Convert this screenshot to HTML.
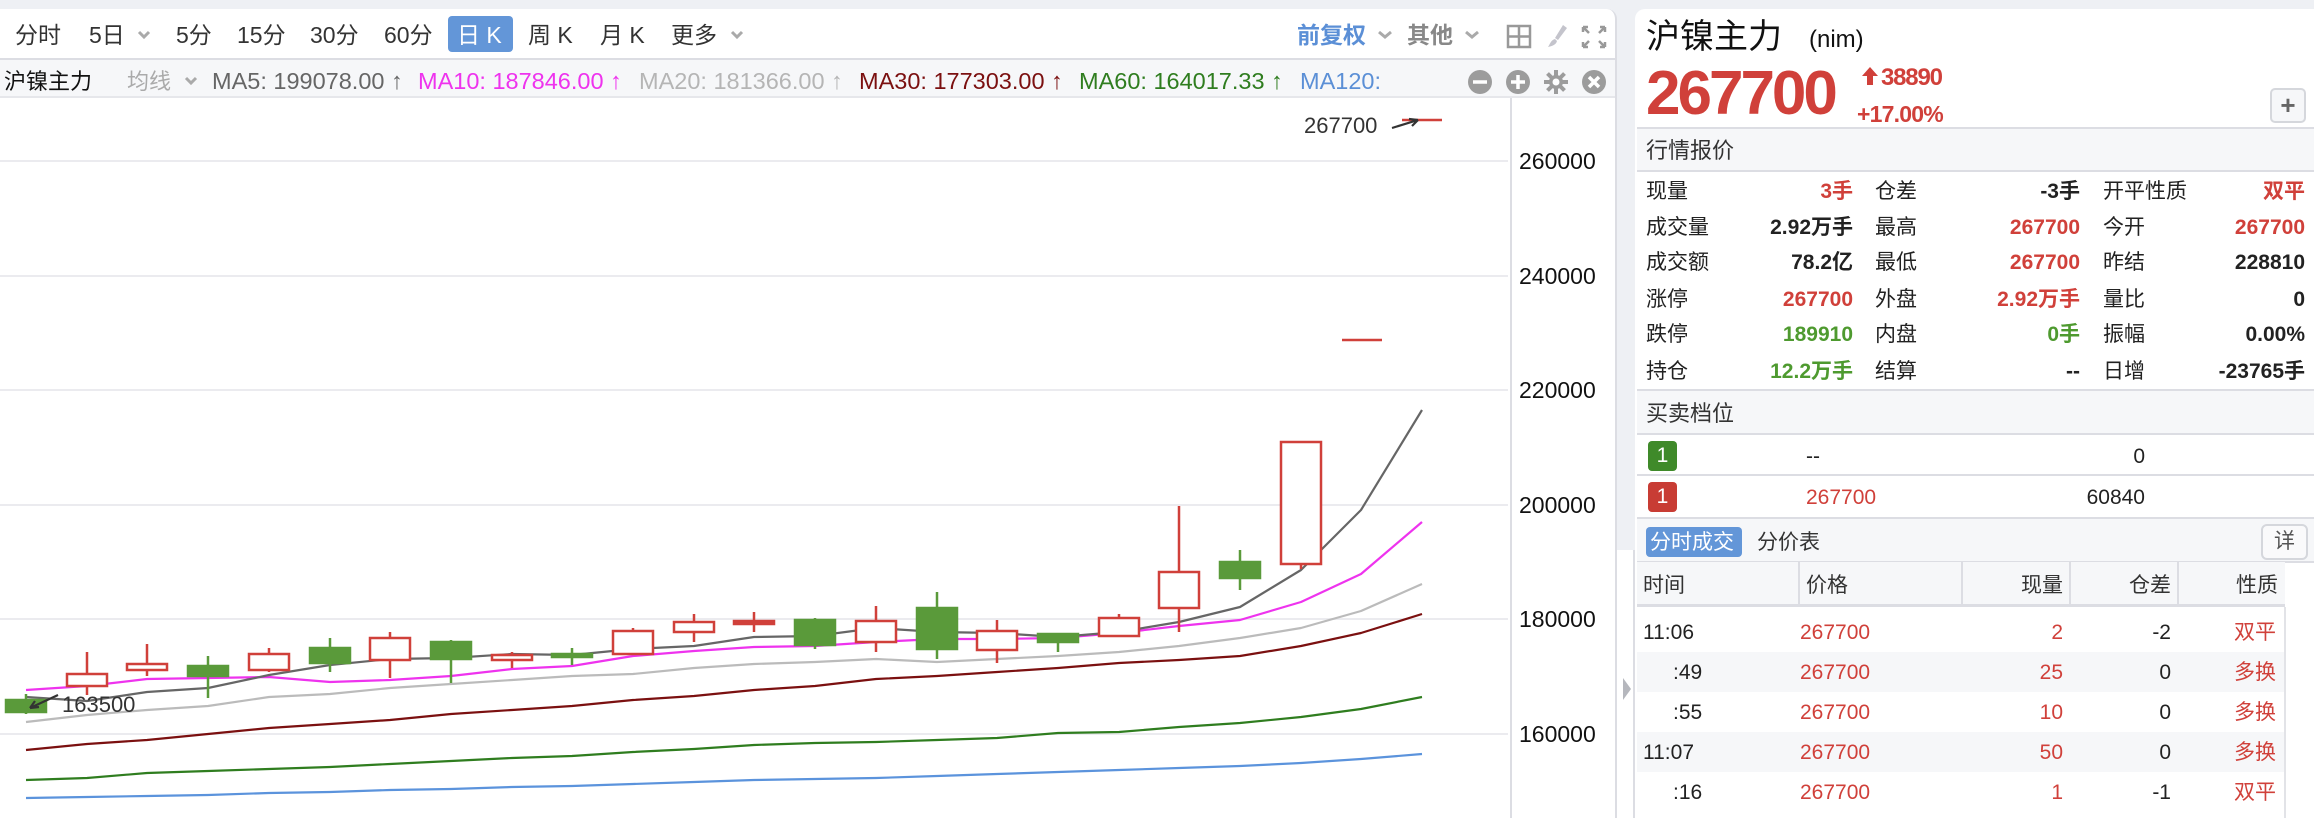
<!DOCTYPE html>
<html><head><meta charset="utf-8">
<style>
*{margin:0;padding:0;box-sizing:border-box}
body{width:2314px;height:818px;background:#eef0f4;position:relative;overflow:hidden;font-family:"Liberation Sans","Noto Sans CJK SC",sans-serif;color:#222}
.a{position:absolute;white-space:nowrap;line-height:1}
.r{text-align:right}
.red{color:#d0403a}.grn{color:#4e9a2f}
.b{font-weight:bold}
</style></head><body>
<!-- left panel -->
<div class="a" style="left:0;top:9px;width:1617px;height:809px;background:#fff;border-top-right-radius:10px;border-right:2px solid #dcdde3"></div>
<div class="a" style="left:0;top:58px;width:1615px;height:40px;background:#f6f7f9;border-top:2px solid #dcdde3;border-bottom:2px solid #e6e7eb"></div>
<!-- toolbar -->
<div style="font-size:23px;color:#333">
<span class="a" style="left:15px;top:24px">分时</span>
<span class="a" style="left:89px;top:24px">5日</span>
<span class="a" style="left:176px;top:24px">5分</span>
<span class="a" style="left:237px;top:24px">15分</span>
<span class="a" style="left:310px;top:24px">30分</span>
<span class="a" style="left:384px;top:24px">60分</span>
<span class="a" style="left:448px;top:16px;width:65px;height:36px;background:#6396d8;border-radius:4px;color:#fff;padding:8px 0 0 9px">日 K</span>
<span class="a" style="left:528px;top:24px">周 K</span>
<span class="a" style="left:600px;top:24px">月 K</span>
<span class="a" style="left:671px;top:24px">更多</span>
<span class="a b" style="left:1297px;top:24px;color:#5b8fd6">前复权</span>
<span class="a b" style="left:1407px;top:24px;color:#888">其他</span>
</div>
<svg class="a" style="left:0;top:0" width="1617" height="98">
<g fill="none" stroke="#aaa" stroke-width="3">
<path d="M139 32l5 5 5-5M732 32l5 5 5-5M1379 32l6 5 6-5M1466 32l6 5 6-5M186 78l5 5 5-5"/>
</g>
<g fill="none" stroke="#999" stroke-width="2.5"><rect x="1508" y="26" width="22" height="21"/><path d="M1519 26v21M1508 36.5h22"/></g>
<path d="M1563 25l4 3-9 12-3-2z M1555 39c-4 1-5 5-7 8 4-1 8-2 9-6z" fill="#c4c4cc"/>
<g fill="none" stroke="#999" stroke-width="2.5"><path d="M1583 27l6 6M1583 27h5M1583 27v5M1605 27l-6 6M1605 27h-5M1605 27v5M1583 47l6-6M1583 47h5M1583 47v-5M1605 47l-6-6M1605 47h-5M1605 47v-5"/></g>
<g fill="#9c9c9c"><circle cx="1480" cy="82" r="12"/><circle cx="1518" cy="82" r="12"/><circle cx="1556" cy="82" r="7"/><circle cx="1594" cy="82" r="12"/></g>
<g stroke="#fff" stroke-width="3.5"><path d="M1473 82h14M1511 82h14M1518 75v14M1589 77l10 10M1599 77l-10 10"/></g>
<g stroke="#9c9c9c" stroke-width="4"><path d="M1556 70v24M1544 82h24M1547.5 73.5l17 17M1564.5 73.5l-17 17"/></g>
<circle cx="1556" cy="82" r="3.5" fill="#fff"/>
</svg>
<div style="font-size:22px">
<span class="a" style="left:4px;top:71px;color:#111">沪镍主力</span>
<span class="a" style="left:127px;top:71px;color:#aaa">均线</span>
</div>
<div style="font-size:23.5px">
<span class="a" style="left:212px;top:70px;color:#666">MA5: 199078.00 ↑</span>
<span class="a" style="left:418px;top:70px;color:#ee33ee">MA10: 187846.00 ↑</span>
<span class="a" style="left:639px;top:70px;color:#b5b5b5">MA20: 181366.00 ↑</span>
<span class="a" style="left:859px;top:70px;color:#7b1010">MA30: 177303.00 ↑</span>
<span class="a" style="left:1079px;top:70px;color:#2f7d1f">MA60: 164017.33 ↑</span>
<span class="a" style="left:1300px;top:70px;color:#5b8fd6">MA120:</span>
</div>
<!-- chart -->
<svg class="a" style="left:0;top:0" width="1615" height="818">
<g stroke="#ebebef" stroke-width="2"><path d="M0 161H1508M0 276H1508M0 390H1508M0 505H1508M0 619H1508M0 734H1508"/></g>
<path d="M1511 98V818" stroke="#dcdde3" stroke-width="2"/>
<g font-family="Liberation Sans,sans-serif" font-size="23" fill="#111">
<text x="1519" y="169">260000</text><text x="1519" y="284">240000</text><text x="1519" y="398">220000</text><text x="1519" y="513">200000</text><text x="1519" y="627">180000</text><text x="1519" y="742">160000</text>
</g>
<g fill="none" stroke-width="2.2" stroke-linejoin="round">
<polyline stroke="#5b93dc" points="26,798 87,797 147,796 208,795 269,793 330,792 390,790 451,789 512,787 572,786 633,784 694,782 754,780 815,779 876,778 937,776 997,774 1058,772 1119,770 1179,768 1240,766 1301,763 1361,759 1422,754"/>
<polyline stroke="#2f7d1f" points="26,780 87,778 147,773 208,771 269,769 330,767 390,764 451,761 512,758 572,756 633,752 694,749 754,745 815,743 876,742 937,740 997,738 1058,733 1119,732 1179,727 1240,723 1301,717 1361,709 1422,697"/>
<polyline stroke="#7b1010" points="26,750 87,744 147,740 208,734 269,728 330,724 390,720 451,714 512,710 572,706 633,700 694,696 754,690 815,686 876,679 937,676 997,672 1058,668 1119,663 1179,660 1240,656 1301,646 1361,633 1422,614"/>
<polyline stroke="#bbb" points="26,722 87,715 147,710 208,706 269,697 330,694 390,688 451,684 512,680 572,676 633,674 694,668 754,664 815,662 876,659 937,662 997,659 1058,656 1119,652 1179,646 1240,638 1301,628 1361,611 1422,584"/>
<polyline stroke="#ee33ee" points="26,690 87,686 147,679 208,678 269,677 330,682 390,680 451,676 512,669 572,666 633,656 694,651 754,647 815,646 876,642 937,639 997,639 1058,638 1119,633 1179,626 1240,620 1301,602 1361,574 1422,522"/>
<polyline stroke="#666" points="26,697 87,701 147,692 208,688 269,675 330,665 390,659 451,658 512,654 572,655 633,649 694,646 754,637 815,636 876,628 937,632 997,633 1058,637 1119,632 1179,622 1240,607 1301,570 1361,510 1422,410"/>
</g>
<g stroke-width="2.5">
<g stroke="#5a9a3a" fill="#5a9a3a">
<path d="M26 694V714M208 656V698M330 638V672M451 640V683M572 648V665M815 618V649M937 592V659M1058 634V652M1240 550V590"/>
<rect x="6" y="700" width="40" height="12"/><rect x="188" y="666" width="40" height="10"/><rect x="310" y="648" width="40" height="15"/><rect x="431" y="642" width="40" height="17"/><rect x="552" y="654" width="40" height="3"/><rect x="795" y="620" width="40" height="25"/><rect x="917" y="608" width="40" height="41"/><rect x="1038" y="634" width="40" height="8"/><rect x="1220" y="562" width="40" height="16"/>
</g>
<g stroke="#d0403a" fill="#fff">
<path d="M87 652V695M147 644V676M269 648V672M390 632V678M512 652V668M633 628V654M694 614V642M754 612V632M876 606V652M997 620V663M1119 614V636M1179 506V632M1301 442V569"/>
<rect x="67" y="674" width="40" height="12"/><rect x="127" y="664" width="40" height="6"/><rect x="249" y="654" width="40" height="16"/><rect x="370" y="638" width="40" height="22"/><rect x="492" y="655" width="40" height="5"/><rect x="613" y="631" width="40" height="23"/><rect x="674" y="622" width="40" height="10"/><rect x="856" y="621" width="40" height="21"/><rect x="977" y="631" width="40" height="19"/><rect x="1099" y="618" width="40" height="18"/><rect x="1159" y="572" width="40" height="36"/><rect x="1281" y="442" width="40" height="122"/>
<rect x="734" y="621" width="40" height="3" fill="#d0403a"/>
<path d="M1342 340H1382M1402 120H1442"/>
</g>
</g>
<g stroke="#333" stroke-width="2.2" fill="none"><path d="M58 695L30 708M30 708l9 -1M30 708l5 -7"/><path d="M1392 128L1418 120M1418 120l-9 -1M1418 120l-6 6"/></g>
<g font-family="Liberation Sans,sans-serif" font-size="22" fill="#333"><text x="62" y="712">163500</text><text x="1304" y="133">267700</text></g>
</svg>
<!-- splitter -->
<div class="a" style="left:1617px;top:550px;width:18px;height:268px;background:#fff;border-right:2px solid #dcdde3"></div>
<svg class="a" style="left:1620px;top:676px" width="14" height="26"><path d="M3 2L11 13L3 24Z" fill="#b5b7bd"/></svg>
<!-- right panel -->
<div class="a" style="left:1635px;top:9px;width:679px;height:809px;background:#fff;border-top-left-radius:10px"></div>
<span class="a" style="left:1646px;top:20px;font-size:34px;color:#111">沪镍主力</span>
<span class="a" style="left:1809px;top:28px;font-size:24px;color:#111">(nim)</span>
<span class="a b red" style="left:1646px;top:63px;font-size:62px;letter-spacing:-3px">267700</span>
<svg class="a" style="left:1860px;top:66px" width="20" height="20"><path d="M10 1L18 10H13V19H7V10H2Z" fill="#d0403a"/></svg>
<span class="a b red" style="left:1881px;top:66px;font-size:24px;letter-spacing:-1.2px">38890</span>
<span class="a b red" style="left:1857px;top:103px;font-size:23px;letter-spacing:-0.8px">+17.00%</span>
<div class="a" style="left:2270px;top:88px;width:36px;height:35px;border:2px solid #d5d7dc;border-radius:5px;background:#f6f7f9;font-size:26px;color:#666;text-align:center;line-height:30px;font-weight:bold">+</div>
<div class="a" style="left:1637px;top:127px;width:677px;height:45px;background:#f6f7f9;border-top:2px solid #dcdde3;border-bottom:2px solid #dcdde3"></div>
<span class="a" style="left:1646px;top:140px;font-size:22px;color:#333">行情报价</span>
<div style="font-size:21px">
<span class="a" style="left:1646px;top:181px">现量</span><span class="a r red b" style="right:461px;top:181px">3手</span><span class="a" style="left:1875px;top:181px">仓差</span><span class="a r b" style="right:234px;top:181px">-3手</span><span class="a" style="left:2103px;top:181px">开平性质</span><span class="a r red b" style="right:9px;top:181px">双平</span>
<span class="a" style="left:1646px;top:217px">成交量</span><span class="a r b" style="right:461px;top:217px">2.92万手</span><span class="a" style="left:1875px;top:217px">最高</span><span class="a r red b" style="right:234px;top:217px">267700</span><span class="a" style="left:2103px;top:217px">今开</span><span class="a r red b" style="right:9px;top:217px">267700</span>
<span class="a" style="left:1646px;top:252px">成交额</span><span class="a r b" style="right:461px;top:252px">78.2亿</span><span class="a" style="left:1875px;top:252px">最低</span><span class="a r red b" style="right:234px;top:252px">267700</span><span class="a" style="left:2103px;top:252px">昨结</span><span class="a r b" style="right:9px;top:252px">228810</span>
<span class="a" style="left:1646px;top:289px">涨停</span><span class="a r red b" style="right:461px;top:289px">267700</span><span class="a" style="left:1875px;top:289px">外盘</span><span class="a r red b" style="right:234px;top:289px">2.92万手</span><span class="a" style="left:2103px;top:289px">量比</span><span class="a r b" style="right:9px;top:289px">0</span>
<span class="a" style="left:1646px;top:324px">跌停</span><span class="a r grn b" style="right:461px;top:324px">189910</span><span class="a" style="left:1875px;top:324px">内盘</span><span class="a r grn b" style="right:234px;top:324px">0手</span><span class="a" style="left:2103px;top:324px">振幅</span><span class="a r b" style="right:9px;top:324px">0.00%</span>
<span class="a" style="left:1646px;top:361px">持仓</span><span class="a r grn b" style="right:461px;top:361px">12.2万手</span><span class="a" style="left:1875px;top:361px">结算</span><span class="a r b" style="right:234px;top:361px">--</span><span class="a" style="left:2103px;top:361px">日增</span><span class="a r b" style="right:9px;top:361px">-23765手</span>
</div>
<div class="a" style="left:1637px;top:389px;width:677px;height:46px;background:#f6f7f9;border-top:2px solid #dcdde3;border-bottom:2px solid #dcdde3"></div>
<span class="a" style="left:1646px;top:403px;font-size:22px;color:#333">买卖档位</span>
<div class="a" style="left:1648px;top:441px;width:29px;height:30px;background:#3f8a2a;border-radius:4px;color:#fff;font-size:21px;text-align:center;line-height:30px">1</div>
<span class="a" style="left:1806px;top:446px;font-size:21px">--</span>
<span class="a r" style="right:169px;top:446px;font-size:21px">0</span>
<div class="a" style="left:1637px;top:474px;width:677px;height:2px;background:#dcdde3"></div>
<div class="a" style="left:1648px;top:482px;width:29px;height:30px;background:#c83c34;border-radius:4px;color:#fff;font-size:21px;text-align:center;line-height:30px">1</div>
<span class="a red" style="left:1806px;top:487px;font-size:21px">267700</span>
<span class="a r" style="right:169px;top:487px;font-size:21px">60840</span>
<div class="a" style="left:1637px;top:517px;width:677px;height:46px;background:#f6f7f9;border-top:2px solid #dcdde3;border-bottom:2px solid #dcdde3"></div>
<div class="a" style="left:1646px;top:527px;width:96px;height:30px;background:#6396d8;border-radius:4px;color:#fff;font-size:21px;padding:5px 0 0 4px">分时成交</div>
<span class="a" style="left:1757px;top:532px;font-size:21px;color:#333">分价表</span>
<div class="a" style="left:2261px;top:524px;width:47px;height:36px;border:2px solid #d5d7dc;border-radius:6px;background:#fafafb;font-size:21px;color:#555;text-align:center;line-height:32px">详</div>
<div class="a" style="left:1637px;top:562px;width:648px;height:45px;background:#f6f7f9;border-bottom:3px solid #dcdde3"></div>
<div class="a" style="left:1798px;top:562px;width:2px;height:44px;background:#dcdde3"></div>
<div class="a" style="left:1961px;top:562px;width:2px;height:44px;background:#dcdde3"></div>
<div class="a" style="left:2069px;top:562px;width:2px;height:44px;background:#dcdde3"></div>
<div class="a" style="left:2177px;top:562px;width:2px;height:44px;background:#dcdde3"></div>
<div class="a" style="left:2284px;top:607px;width:2px;height:211px;background:#e2e3e7"></div>
<div style="font-size:21px;color:#333">
<span class="a" style="left:1643px;top:575px">时间</span><span class="a" style="left:1806px;top:575px">价格</span><span class="a r" style="right:251px;top:575px">现量</span><span class="a r" style="right:143px;top:575px">仓差</span><span class="a r" style="right:36px;top:575px">性质</span>
</div>
<div class="a" style="left:1637px;top:652px;width:647px;height:40px;background:#f6f7f9"></div>
<div class="a" style="left:1637px;top:732px;width:647px;height:40px;background:#f6f7f9"></div>
<div style="font-size:21px">
<span class="a" style="left:1643px;top:622px">11:06</span><span class="a red" style="left:1800px;top:622px">267700</span><span class="a r red" style="right:251px;top:622px">2</span><span class="a r" style="right:143px;top:622px">-2</span><span class="a r red" style="right:38px;top:622px">双平</span>
<span class="a" style="left:1673px;top:662px">:49</span><span class="a red" style="left:1800px;top:662px">267700</span><span class="a r red" style="right:251px;top:662px">25</span><span class="a r" style="right:143px;top:662px">0</span><span class="a r red" style="right:38px;top:662px">多换</span>
<span class="a" style="left:1673px;top:702px">:55</span><span class="a red" style="left:1800px;top:702px">267700</span><span class="a r red" style="right:251px;top:702px">10</span><span class="a r" style="right:143px;top:702px">0</span><span class="a r red" style="right:38px;top:702px">多换</span>
<span class="a" style="left:1643px;top:742px">11:07</span><span class="a red" style="left:1800px;top:742px">267700</span><span class="a r red" style="right:251px;top:742px">50</span><span class="a r" style="right:143px;top:742px">0</span><span class="a r red" style="right:38px;top:742px">多换</span>
<span class="a" style="left:1673px;top:782px">:16</span><span class="a red" style="left:1800px;top:782px">267700</span><span class="a r red" style="right:251px;top:782px">1</span><span class="a r" style="right:143px;top:782px">-1</span><span class="a r red" style="right:38px;top:782px">双平</span>
</div>
</body></html>
